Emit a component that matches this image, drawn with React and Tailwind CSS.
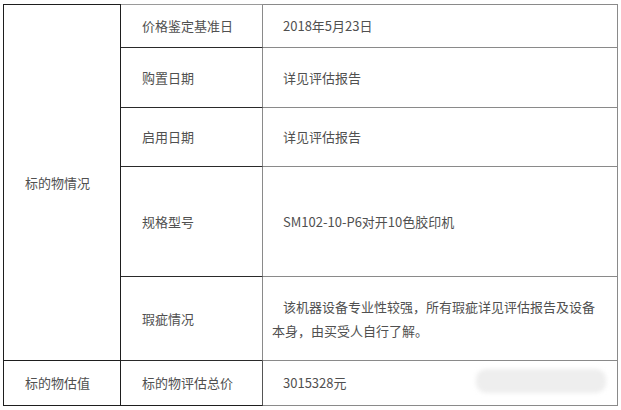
const FONT = { fontFamily: '"Noto Sans CJK SC", "Liberation Sans", sans-serif' };

const rows = [
  { label: '价格鉴定基准日', value: '2018年5月23日', h: 'h-[44px]' },
  { label: '购置日期', value: '详见评估报告', h: 'h-[60px]' },
  { label: '启用日期', value: '详见评估报告', h: 'h-[59px]' },
  { label: '规格型号', value: 'SM102-10-P6对开10色胶印机', h: 'h-[110px]' },
  {
    label: '瑕疵情况',
    value: '该机器设备专业性较强，所有瑕疵详见评估报告及设备本身，由买受人自行了解。',
    h: 'h-[84px]',
  },
];

export default function App() {
  return (
    <div className="relative w-[621px] h-[410px] bg-white pt-[4px] pl-[3px] text-[13px] text-[#505050]" style={FONT}>
      <div className="grid grid-cols-[117px_142px_355px] w-[615px] border-l border-[#1e1e1e]">
        {/* left column spanning the first five rows */}
        <div className="row-span-5 flex items-center pl-[21px] border-t border-r border-b border-[#1e1e1e]">
          标的物情况
        </div>
        {rows.map((r, i) => (
          <div key={i} className="contents">
            <div
              className={`${r.h} flex items-center pl-[21px] border-b border-r border-b-[#2a2a2a] border-r-[#8a8a8a] ${
                i === 0 ? 'border-t border-t-[#9a9a9a]' : ''
              }`}
            >
              {r.label}
            </div>
            <div
              className={`${r.h} flex items-center pl-[9px] pr-[14px] border-b border-r border-[#8a8a8a] ${
                i === 0 ? 'border-t' : ''
              }`}
            >
              <p className="indent-[11px] leading-[24px]">{r.value}</p>
            </div>
          </div>
        ))}
        <div className="h-[45px] flex items-center pl-[21px] border-r border-b border-[#1e1e1e]">标的物估值</div>
        <div className="h-[45px] flex items-center pl-[21px] border-r border-b border-r-[#555] border-b-[#1e1e1e]">
          标的物评估总价
        </div>
        <div className="h-[45px] flex items-center pl-[9px] border-r border-b border-[#8a8a8a]">
          <p className="indent-[11px]">3015328元</p>
        </div>
      </div>
      {/* faded watermark over the last row */}
      <div className="absolute left-[476px] top-[369px] w-[130px] h-[24px] rounded-[10px] bg-[#eeeeee] blur-[2px]" />
    </div>
  );
}
